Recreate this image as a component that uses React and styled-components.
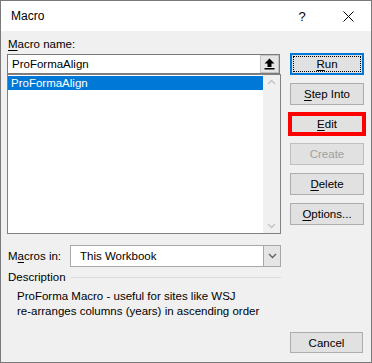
import React from 'react';
import styled, { createGlobalStyle } from 'styled-components';

const GlobalStyle = createGlobalStyle`
  html, body {
    margin: 0;
    padding: 0;
    background: #ffffff;
  }
  body {
    font-family: 'Liberation Sans', Arial, sans-serif;
    font-size: 11.5px;
    color: #000;
  }
`;

const Window = styled.div`
  width: 372px;
  height: 363px;
  box-sizing: border-box;
  border: 1px solid #7a7a7a;
  display: flex;
  flex-direction: column;
  background: #f0f0f0;
`;

const TitleBar = styled.div`
  height: 30px;
  background: #ffffff;
  display: flex;
  align-items: center;
  padding-left: 9px;
`;

const Title = styled.div`
  flex: 1;
  font-size: 12px;
  padding-left: 1px;
`;

const TitleButton = styled.div`
  width: 46px;
  height: 30px;
  display: flex;
  align-items: center;
  justify-content: center;
  font-size: 13px;
`;

const Body = styled.div`
  flex: 1;
  display: flex;
  flex-direction: column;
  padding: 0 7px 9px 6px;
`;

const Main = styled.div`
  display: grid;
  grid-template-columns: 274px 74px;
  column-gap: 9px;
`;

const LeftCol = styled.div`
  display: flex;
  flex-direction: column;
  padding-top: 5px;
`;

const Label = styled.div`
  height: 16px;
  line-height: 16px;
  margin-bottom: 2px;
  padding-left: 1px;
`;

const Key = styled.span`
  text-decoration: underline;
  text-underline-offset: 2px;
`;

const NameBox = styled.div`
  width: 273px;
  height: 20px;
  box-sizing: border-box;
  border: 1px solid #7a7a7a;
  background: #fff;
  display: flex;
  align-items: center;
`;

const NameText = styled.div`
  flex: 1;
  padding-left: 4px;
`;

const UpButton = styled.div`
  width: 19px;
  height: 18px;
  box-sizing: border-box;
  border: 1px solid #c4c4c4;
  background: #e5e5e5;
  display: flex;
  align-items: center;
  justify-content: center;
`;

const List = styled.div`
  width: 274px;
  height: 160px;
  box-sizing: border-box;
  border: 1px solid #828282;
  background: #fff;
  display: flex;
`;

const Items = styled.div`
  flex: 1;
  padding: 1px 0 0 0;
`;

const Item = styled.div`
  height: 14px;
  line-height: 14px;
  padding-left: 3px;
  background: ${(p) => (p.selected ? '#0078d7' : 'transparent')};
  color: ${(p) => (p.selected ? '#fff' : '#000')};
`;

const Scrollbar = styled.div`
  width: 17px;
  background: #f0f0f0;
  display: flex;
  flex-direction: column;
  justify-content: space-between;
  align-items: center;
  padding: 4px 0;
`;

const ComboRow = styled.div`
  display: flex;
  align-items: center;
  margin-top: 11px;
  height: 22px;
`;

const ComboLabel = styled.div`
  width: 62px;
  padding-left: 1px;
`;

const Combo = styled.div`
  flex: 1;
  height: 22px;
  box-sizing: border-box;
  border: 1px solid #a8a8a8;
  background: #fff;
  display: flex;
`;

const ComboText = styled.div`
  flex: 1;
  line-height: 20px;
  padding-left: 9px;
`;

const ComboButton = styled.div`
  width: 17px;
  box-sizing: border-box;
  border-left: 1px solid #a8a8a8;
  background: #e5e5e5;
  display: flex;
  align-items: center;
  justify-content: center;
`;

const RightCol = styled.div`
  display: flex;
  flex-direction: column;
  gap: 8px;
  padding-top: 22px;
`;

const Button = styled.div`
  position: relative;
  width: 74px;
  height: 22px;
  box-sizing: border-box;
  border: 1px solid ${(p) => (p.disabled ? '#bfbfbf' : '#adadad')};
  background: #e1e1e1;
  color: ${(p) => (p.disabled ? '#a0a0a0' : '#000')};
  display: flex;
  align-items: center;
  justify-content: center;

  ${(p) =>
    p.primary &&
    `
    border: 2px solid #0078d7;
    &::after {
      content: '';
      position: absolute;
      inset: 1px;
      border: 1px dotted #000;
    }
  `}

  ${(p) =>
    p.highlighted &&
    `
    width: 78px;
    height: 24px;
    margin: -1px -2px;
    border: 4px solid #ff0000;
  `}
`;

const DescHeader = styled.div`
  display: flex;
  align-items: center;
  gap: 5px;
  margin-top: 3px;
  width: 274px;
  height: 14px;
  padding-left: 1px;
  box-sizing: border-box;
`;

const DescLine = styled.div`
  flex: 1;
  height: 1px;
  background: #dcdcdc;
`;

const DescText = styled.div`
  margin: 5px 0 0 10px;
  line-height: 15px;
`;

const Footer = styled.div`
  margin-top: auto;
  display: flex;
  justify-content: flex-end;
  padding-right: 1px;
`;

const CancelButton = styled(Button)`
  width: 73px;
  height: 21px;
`;

const UpArrowIcon = () => (
  <svg width="11" height="12" viewBox="0 0 11 12">
    <path d="M5.5 0.5 L10.5 5.5 H7.5 V9 H3.5 V5.5 H0.5 Z" fill="#000" />
    <rect x="0.5" y="10" width="10" height="1.5" fill="#000" />
  </svg>
);

const Chevron = ({ up, color }) => (
  <svg width="9" height="6" viewBox="0 0 9 6">
    <polyline
      points={up ? '1,5 4.5,1.5 8,5' : '1,1 4.5,4.5 8,1'}
      fill="none"
      stroke={color}
      strokeWidth="1.3"
    />
  </svg>
);

const CloseIcon = () => (
  <svg width="11" height="11" viewBox="0 0 11 11">
    <path d="M0.5 0.5 L10.5 10.5 M10.5 0.5 L0.5 10.5" stroke="#000" strokeWidth="1" />
  </svg>
);

export default function App() {
  return (
    <>
      <GlobalStyle />
      <Window>
        <TitleBar>
          <Title>Macro</Title>
          <TitleButton>?</TitleButton>
          <TitleButton>
            <CloseIcon />
          </TitleButton>
        </TitleBar>
        <Body>
          <Main>
            <LeftCol>
              <Label>
                <Key>M</Key>acro name:
              </Label>
              <NameBox>
                <NameText>ProFormaAlign</NameText>
                <UpButton>
                  <UpArrowIcon />
                </UpButton>
              </NameBox>
              <List>
                <Items>
                  <Item selected>ProFormaAlign</Item>
                </Items>
                <Scrollbar>
                  <Chevron up color="#c2c2c2" />
                  <Chevron color="#c2c2c2" />
                </Scrollbar>
              </List>
              <ComboRow>
                <ComboLabel>
                  M<Key>a</Key>cros in:
                </ComboLabel>
                <Combo>
                  <ComboText>This Workbook</ComboText>
                  <ComboButton>
                    <Chevron color="#606060" />
                  </ComboButton>
                </Combo>
              </ComboRow>
            </LeftCol>
            <RightCol>
              <Button primary>
                <span>
                  <Key>R</Key>un
                </span>
              </Button>
              <Button>
                <span>
                  <Key>S</Key>tep Into
                </span>
              </Button>
              <Button highlighted>
                <span>
                  <Key>E</Key>dit
                </span>
              </Button>
              <Button disabled>Create</Button>
              <Button>
                <span>
                  <Key>D</Key>elete
                </span>
              </Button>
              <Button>
                <span>
                  <Key>O</Key>ptions...
                </span>
              </Button>
            </RightCol>
          </Main>
          <DescHeader>
            <span>Description</span>
            <DescLine />
          </DescHeader>
          <DescText>
            ProForma Macro - useful for sites like WSJ
            <br />
            re-arranges columns (years) in ascending order
          </DescText>
          <Footer>
            <CancelButton>Cancel</CancelButton>
          </Footer>
        </Body>
      </Window>
    </>
  );
}
